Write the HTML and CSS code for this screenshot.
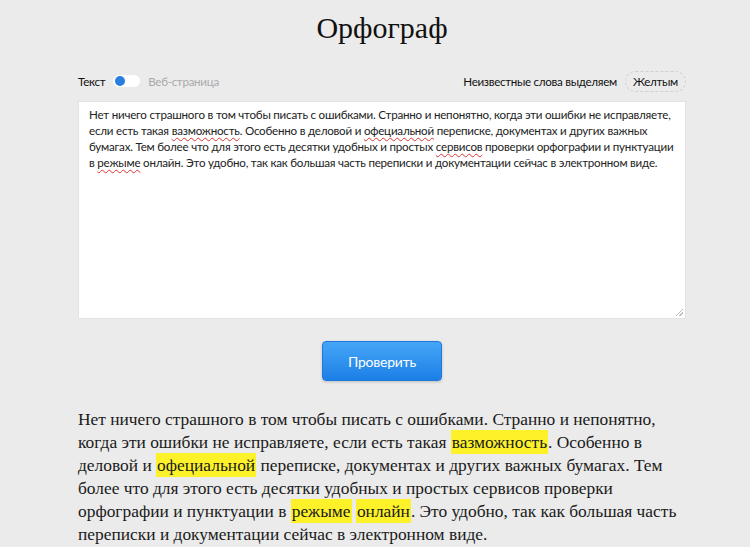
FILE: index.html
```html
<!DOCTYPE html>
<html lang="ru">
<head>
    <meta charset="UTF-8">
    <meta name="viewport" content="width=device-width, initial-scale=1.0">
    <title>Орфограф</title>
    <link rel="stylesheet" href="styles.css">
</head>
<body>
    <div class="page">
        <h1 class="title">Орфограф</h1>
        <div class="options">
            <div class="mode">
                <span class="mode-label">Текст</span>
                <span class="switch"><span class="switch-knob"></span></span>
                <span class="mode-label mode-off">Веб-страница</span>
            </div>
            <div class="marker">
                <span>Неизвестные слова выделяем</span>
                <span class="marker-color">Желтым</span>
            </div>
        </div>
        <div class="editor">
            Нет ничего страшного в том чтобы писать с ошибками. Странно и непонятно, когда эти ошибки не исправляете, если есть такая <span class="typo">вазможность</span>. Особенно в деловой и <span class="typo">офециальной</span> переписке, документах и других важных бумагах. Тем более что для этого есть десятки удобных и простых <span class="typo">сервисов</span> проверки орфографии и пунктуации в <span class="typo">режыме</span> онлайн. Это удобно, так как большая часть переписки и документации сейчас в электронном виде.
            <span class="grip"></span>
        </div>
        <div class="actions">
            <button class="check-btn">Проверить</button>
        </div>
        <p class="result">
            Нет ничего страшного в том чтобы писать с ошибками. Странно и непонятно, когда эти ошибки не исправляете, если есть такая <mark>вазможность</mark>. Особенно в деловой и <mark>офециальной</mark> переписке, документах и других важных бумагах. Тем более что для этого есть десятки удобных и простых сервисов проверки орфографии и пунктуации в <mark>режыме</mark> <mark>онлайн</mark>. Это удобно, так как большая часть переписки и документации сейчас в электронном виде.
        </p>
    </div>
</body>
</html>
```

FILE: styles.css
```css
body {
    margin: 0;
    padding: 0;
    background-color: #ebebeb;
    font-family: "Lato", "Open Sans", sans-serif;
    color: #111;
}
.page {
    width: 608px;
    margin: 0 0 0 78px;
}
.title {
    margin: 0;
    padding-top: 10px;
    height: 44px;
    text-align: center;
    font-family: "Liberation Serif", serif;
    font-weight: normal;
    font-size: 30px;
    line-height: 36px;
    color: #111;
}
.options {
    display: flex;
    justify-content: space-between;
    align-items: center;
    height: 28px;
    margin-top: 13px;
    font-size: 11.6px;
    letter-spacing: -0.3px;
}
.mode {
    display: flex;
    align-items: center;
    gap: 8px;
}
.mode-off {
    color: #aaa;
}
.switch {
    position: relative;
    width: 27px;
    height: 12px;
    border-radius: 6px;
    background-color: #fff;
}
.switch-knob {
    position: absolute;
    left: 2px;
    top: 1px;
    width: 10px;
    height: 10px;
    border-radius: 50%;
    background-color: #2a7de1;
}
.marker {
    display: flex;
    align-items: center;
    gap: 8px;
}
.marker-color {
    padding: 3px 7px;
    border: 1px dashed #cfcfcf;
    border-radius: 11px;
}
.editor {
    position: relative;
    box-sizing: border-box;
    height: 218px;
    margin-top: 6px;
    padding: 5px 10px;
    background-color: #fff;
    border: 1px solid #e2e2e2;
    font-size: 11.6px;
    letter-spacing: -0.22px;
    line-height: 16px;
    color: #222;
}
.typo {
    text-decoration: underline wavy #d33;
    text-decoration-thickness: 1px;
    text-underline-offset: 2px;
}
.grip {
    position: absolute;
    right: 2px;
    bottom: 2px;
    width: 7px;
    height: 7px;
    background: linear-gradient(135deg, transparent 45%, #bbb 45%, #bbb 55%, transparent 55%, transparent 70%, #bbb 70%, #bbb 80%, transparent 80%);
}
.actions {
    display: flex;
    justify-content: center;
    padding-top: 22px;
}
.check-btn {
    width: 120px;
    height: 40px;
    border: 1px solid #1f78db;
    border-radius: 4px;
    background: linear-gradient(#45a6f6, #1c7fe6);
    color: #fff;
    font-family: "Lato", sans-serif;
    font-size: 14px;
    letter-spacing: -0.2px;
    box-shadow: 0 1px 3px rgba(0, 0, 0, 0.2);
    cursor: pointer;
}
.result {
    margin: 27px 0 0;
    font-family: "Liberation Serif", serif;
    font-size: 17.4px;
    line-height: 23px;
    color: #1a1a1a;
}
mark {
    background-color: #fdf22a;
    color: inherit;
    padding: 2px 1px;
}
```
